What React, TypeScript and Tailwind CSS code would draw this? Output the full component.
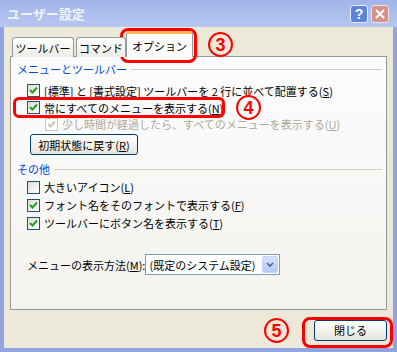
import React from 'react';

const Check: React.FC<{ checked?: boolean; disabled?: boolean }> = ({ checked, disabled }) => (
  <span
    className={`w-[13px] h-[13px] shrink-0 flex items-center justify-center border ${
      disabled ? 'border-[#cac8bb] bg-white' : 'border-[#1c5180] bg-linear-to-br from-[#dcdcd7] to-white'
    }`}
  >
    {checked && (
      <svg width="11" height="11" viewBox="0 0 11 11">
        <path d="M2 5 L4.5 7.5 L9 2.5" fill="none" stroke={disabled ? '#cac8bb' : '#21a121'} strokeWidth="2" />
      </svg>
    )}
  </span>
);

const Row: React.FC<{ checked?: boolean; disabled?: boolean; h: string; ml: string; children: React.ReactNode }> = ({
  checked,
  disabled,
  h,
  ml,
  children,
}) => (
  <div className={`flex items-center gap-[4px] ${h} ${ml}`}>
    <Check checked={checked} disabled={disabled} />
    <span className={`whitespace-nowrap ${disabled ? 'text-[#aca899]' : 'text-black'}`}>{children}</span>
  </div>
);

const Heading: React.FC<{ children: React.ReactNode }> = ({ children }) => (
  <div className="flex items-center h-[14px] pl-[6px] pr-[4px]">
    <span className="text-[#0046d5] whitespace-nowrap">{children}</span>
    <span className="flex-1 ml-[4px] border-t border-[#d0d0bf]" />
  </div>
);

const Circled: React.FC<{ n: string; className: string }> = ({ n, className }) => (
  <div
    className={`absolute w-[25px] h-[25px] rounded-full border-[2.5px] border-[#ff0000] flex items-center justify-center text-[#ff0000] font-bold text-[18px] leading-none font-['Liberation_Sans',sans-serif] ${className}`}
  >
    {n}
  </div>
);

export default function App() {
  return (
    <div className="relative w-[397px] h-[352px] bg-[#93a4e3] flex flex-col text-[11px] leading-[14px] font-['Noto_Sans_CJK_JP',sans-serif]">
      {/* title bar */}
      <div className="h-[27px] flex items-center pl-[7px] pr-[8px] bg-linear-to-b from-[#a0b4e9] to-[#b6c7f0]">
        <span className="flex-1 text-[13px] font-bold text-[#eef2fb]">ユーザー設定</span>
        <div className="flex gap-[3px]">
          <div className="w-[18px] h-[18px] rounded-[3px] border border-[#e8eefb] bg-[#5b84dc] flex items-center justify-center text-white font-bold text-[14px] font-['Liberation_Sans',sans-serif]">
            ?
          </div>
          <div className="w-[18px] h-[18px] rounded-[3px] border border-[#f0e0e0] bg-[#d4948c] flex items-center justify-center">
            <svg width="10" height="10" viewBox="0 0 10 10">
              <path d="M1 1 L9 9 M9 1 L1 9" stroke="#fff" strokeWidth="2" />
            </svg>
          </div>
        </div>
      </div>

      {/* body */}
      <div className="flex-1 mx-[4px] mb-[4px] bg-[#ece9d8] flex flex-col">
        <div className="relative z-10 flex items-end h-[30px] pl-[8px] -mb-[1px]">
          <div className="w-[62px] h-[20px] border border-b-0 border-[#919b9c] rounded-t-[3px] bg-linear-to-b from-white to-[#ecebe6] flex items-center justify-center">
            ツールバー
          </div>
          <div className="ml-[2px] w-[50px] h-[20px] border border-b-0 border-[#919b9c] rounded-t-[3px] bg-linear-to-b from-white to-[#ecebe6] flex items-center justify-center">
            コマンド
          </div>
          <div className="w-[67px] h-[26px] border border-b-0 border-[#919b9c] border-t-[3px] border-t-[#f7b64b] rounded-t-[3px] bg-[#fcfcfe] flex items-center justify-center">
            オプション
          </div>
        </div>

        <div className="mx-[6px] h-[254px] border border-[#919b9c] bg-linear-to-b from-[#fcfcfe] to-[#f4f3ee] flex flex-col pt-[5px]">
          <Heading>メニューとツールバー</Heading>
          <div className="mt-[6px]">
            <Row checked h="h-[17px]" ml="ml-[16px]">
              [標準] と [書式設定] ツールバーを 2 行に並べて配置する(<u>S</u>)
            </Row>
            <Row checked h="h-[17px]" ml="ml-[16px]">
              常にすべてのメニューを表示する(<u>N</u>)
            </Row>
            <Row checked disabled h="h-[16px]" ml="ml-[34px]">
              少し時間が経過したら、すべてのメニューを表示する(<u>U</u>)
            </Row>
          </div>
          <div className="mt-[2px] ml-[19px]">
            <button className="h-[21px] w-[108px] rounded-[3px] border border-[#003c74] bg-linear-to-b from-white to-[#e6e5de] text-black">
              初期状態に戻す(<u>R</u>)
            </button>
          </div>
          <div className="mt-[7px]">
            <Heading>その他</Heading>
          </div>
          <div className="mt-[2px]">
            <Row h="h-[18px]" ml="ml-[16px]">
              大きいアイコン(<u>L</u>)
            </Row>
            <Row checked h="h-[18px]" ml="ml-[16px]">
              フォント名をそのフォントで表示する(<u>F</u>)
            </Row>
            <Row checked h="h-[18px]" ml="ml-[16px]">
              ツールバーにボタン名を表示する(<u>T</u>)
            </Row>
          </div>
          <div className="mt-[22px] ml-[16px] flex items-center h-[21px]">
            <span className="shrink-0 whitespace-nowrap">
              メニューの表示方法(<u>M</u>):
            </span>
            <div className="w-[135px] h-[21px] border border-[#7f9db9] bg-white flex items-center pl-[3px] pr-[1px]">
              <span className="flex-1 whitespace-nowrap">(既定のシステム設定)</span>
              <div className="w-[16px] h-[17px] rounded-[2px] bg-linear-to-b from-[#d6e2fc] to-[#b4c9f6] border border-[#c3d3fd] flex items-center justify-center">
                <svg width="8" height="5" viewBox="0 0 8 5">
                  <path d="M1 1 L4 4 L7 1" fill="none" stroke="#4d6185" strokeWidth="1.6" />
                </svg>
              </div>
            </div>
          </div>
        </div>

        <div className="flex-1 flex items-center justify-end pr-[6px] pt-[2px]">
          <button className="h-[21px] w-[73px] rounded-[3px] border border-[#003c74] bg-linear-to-b from-white to-[#e6e5de] text-black">
            閉じる
          </button>
        </div>
      </div>

      {/* annotations */}
      <div className="absolute left-[120px] top-[28px] w-[77px] h-[35px] rounded-[8px] border-[3px] border-[#ff0000]" />
      <Circled n="3" className="left-[208px] top-[32px]" />
      <div className="absolute left-[13px] top-[97px] w-[212px] h-[21px] rounded-[6px] border-[3px] border-[#ff0000]" />
      <Circled n="4" className="left-[236px] top-[95px]" />
      <Circled n="5" className="left-[264px] top-[318px]" />
      <div className="absolute left-[302px] top-[317px] w-[91px] h-[31px] rounded-[8px] border-[3px] border-[#ff0000]" />
    </div>
  );
}
